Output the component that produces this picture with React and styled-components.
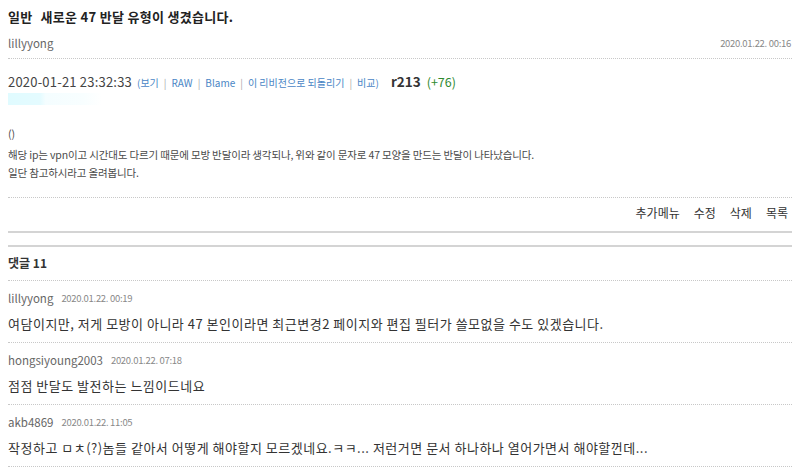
import styled, { createGlobalStyle } from 'styled-components'

const GlobalStyle = createGlobalStyle`
  body {
    margin: 8px;
    background: #ffffff;
    font-family: "Noto Sans CJK KR", "Noto Sans", sans-serif;
    color: #333;
  }
`

const Page = styled.div`
  width: 784px;
`

const Header = styled.div`
  display: flex;
  flex-direction: column;
  gap: 9px;
  padding-bottom: 7px;
  border-bottom: 1px dotted #c8c8c8;
`

const Title = styled.h1`
  display: flex;
  gap: 8px;
  margin: 0;
  font-size: 13px;
  line-height: 18px;
  font-weight: 700;
  color: #222;
  letter-spacing: 0.3px;
`

const MetaRow = styled.div`
  display: flex;
  justify-content: space-between;
  align-items: center;
  height: 16px;
  padding-right: 1px;
`

const Author = styled.span`
  font-size: 11.5px;
  color: #666;
`

const DateText = styled.span`
  font-size: 9.5px;
  color: #888;
  letter-spacing: -0.3px;
  margin-left: ${p => p.$gap || 0}px;
`

const Revision = styled.div`
  display: flex;
  align-items: baseline;
  margin-top: 13px;
  height: 18px;
  line-height: 18px;
`

const RevDate = styled.span`
  font-size: 13px;
  color: #444;
  letter-spacing: 0.2px;
`

const Links = styled.span`
  font-size: 10px;
  color: #4a86c5;
  margin-left: 5px;
`

const Sep = styled.span`
  color: #aaa;
  margin: 0 5px;
`

const RevNo = styled.span`
  font-size: 13.5px;
  font-weight: 700;
  color: #333;
  margin-left: 12px;
`

const Diff = styled.span`
  font-size: 12.5px;
  color: #2f8a2f;
  margin-left: 6px;
`

const Hidden = styled.div`
  margin-top: 3px;
  height: 12px;
  width: 94px;
  background: linear-gradient(90deg, #e0fbff 0%, #e4fbff 34%, #f4fdff 40%, #f8feff 80%, #ffffff 100%);
`

const Body = styled.div`
  margin-top: 20px;
  padding-bottom: 15px;
  border-bottom: 1px dotted #c8c8c8;
  font-size: 10.5px;
  line-height: 18px;
  color: #4a4a4a;
  letter-spacing: -0.15px;
`

const Paren = styled.div`
  margin-bottom: 3px;
`

const Actions = styled.div`
  display: flex;
  justify-content: flex-end;
  gap: 14px;
  margin-top: 7px;
  padding-right: 4px;
  padding-bottom: 10px;
  border-bottom: 2px solid #d4d4d4;
`

const ActionButton = styled.span`
  font-size: 12px;
  line-height: 16px;
  color: #333;
`

const Comments = styled.div`
  margin-top: 12px;
  border-top: 2px solid #d4d4d4;
`

const CommentHead = styled.div`
  padding-top: 8px;
  padding-bottom: 9px;
  border-bottom: 1px dotted #c8c8c8;
  font-size: 12px;
  line-height: 16px;
  font-weight: 700;
  color: #333;
`

const Comment = styled.div`
  display: flex;
  flex-direction: column;
  gap: 10px;
  padding-top: 10px;
  padding-bottom: 9px;
  border-bottom: 1px dotted #c8c8c8;
`

const CommentMeta = styled.div`
  display: flex;
  align-items: center;
  height: 14px;
`

const CommentText = styled.div`
  height: 18px;
  font-size: 13px;
  line-height: 18px;
  color: #333;
  letter-spacing: 0.5px;
  white-space: nowrap;
`

const comments = [
  {
    author: 'lillyyong',
    date: '2020.01.22. 00:19',
    text: '여담이지만, 저게 모방이 아니라 47 본인이라면 최근변경2 페이지와 편집 필터가 쓸모없을 수도 있겠습니다.'
  },
  {
    author: 'hongsiyoung2003',
    date: '2020.01.22. 07:18',
    text: '점점 반달도 발전하는 느낌이드네요'
  },
  {
    author: 'akb4869',
    date: '2020.01.22. 11:05',
    text: '작정하고 ㅁㅊ(?)놈들 같아서 어떻게 해야할지 모르겠네요.ㅋㅋ... 저런거면 문서 하나하나 열어가면서 해야할껀데...'
  }
]

export default function App() {
  const links = ['보기', 'RAW', 'Blame', '이 리비전으로 되돌리기', '비교']

  return (
    <>
      <GlobalStyle />
      <Page>
        <Header>
          <Title>
            <span>일반</span>
            <span>새로운 47 반달 유형이 생겼습니다.</span>
          </Title>
          <MetaRow>
            <Author>lillyyong</Author>
            <DateText>2020.01.22. 00:16</DateText>
          </MetaRow>
        </Header>

        <Revision>
          <RevDate>2020-01-21 23:32:33</RevDate>
          <Links>
            (
            {links.map((l, i) => (
              <span key={l}>
                {i > 0 && <Sep>|</Sep>}
                {l}
              </span>
            ))}
            )
          </Links>
          <RevNo>r213</RevNo>
          <Diff>(+76)</Diff>
        </Revision>
        <Hidden />

        <Body>
          <Paren>()</Paren>
          <div>해당 ip는 vpn이고 시간대도 다르기 때문에 모방 반달이라 생각되나, 위와 같이 문자로 47 모양을 만드는 반달이 나타났습니다.</div>
          <div>일단 참고하시라고 올려봅니다.</div>
        </Body>

        <Actions>
          <ActionButton>추가메뉴</ActionButton>
          <ActionButton>수정</ActionButton>
          <ActionButton>삭제</ActionButton>
          <ActionButton>목록</ActionButton>
        </Actions>

        <Comments>
          <CommentHead>댓글 11</CommentHead>
          {comments.map(c => (
            <Comment key={c.author}>
              <CommentMeta>
                <Author>{c.author}</Author>
                <DateText $gap={8}>{c.date}</DateText>
              </CommentMeta>
              <CommentText>{c.text}</CommentText>
            </Comment>
          ))}
        </Comments>
      </Page>
    </>
  )
}
